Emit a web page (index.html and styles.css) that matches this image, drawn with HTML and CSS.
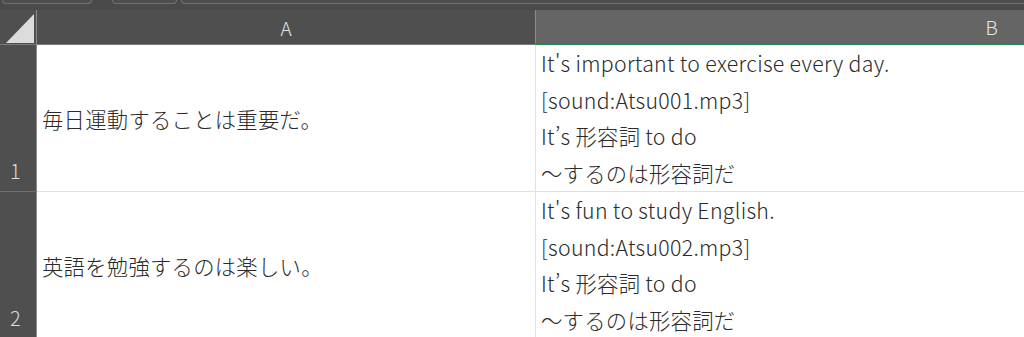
FILE: index.html
```html
<!DOCTYPE html>
<html lang="ja">
<head>
<meta charset="utf-8">
<link rel="stylesheet" href="styles.css">
</head>
<body>
<div class="sheet">
  <div class="topbar">
    <div class="tab tab-1"></div>
    <div class="tab tab-2"></div>
    <div class="tab tab-3"></div>
  </div>
  <div class="grid">
    <div class="corner">
      <svg class="corner-tri" width="28" height="29" viewBox="0 0 28 29"><polygon points="0,29 28,29 28,0" fill="#dcdcdc"/></svg>
    </div>
    <div class="colhead">A</div>
    <div class="colhead colhead-sel"><span class="colhead-b">B</span></div>

    <div class="rowhead">1</div>
    <div class="cell cell-a">毎日運動することは重要だ。</div>
    <div class="cell cell-b">
      <div class="line">It's important to exercise every day.</div>
      <div class="line">[sound:Atsu001.mp3]</div>
      <div class="line">It’s 形容詞 to do</div>
      <div class="line">～するのは形容詞だ</div>
    </div>

    <div class="rowhead">2</div>
    <div class="cell cell-a">英語を勉強するのは楽しい。</div>
    <div class="cell cell-b">
      <div class="line">It's fun to study English.</div>
      <div class="line">[sound:Atsu002.mp3]</div>
      <div class="line">It’s 形容詞 to do</div>
      <div class="line">～するのは形容詞だ</div>
    </div>
  </div>
</div>
</body>
</html>
```
FILE: styles.css
```css
html, body {
  margin: 0;
  padding: 0;
  background: #4b4b4b;
  overflow: hidden;
}
.sheet {
  width: 1024px;
  height: 337px;
  overflow: hidden;
  font-family: "Noto Sans CJK JP", "Noto Sans", sans-serif;
}
.topbar {
  height: 10px;
  display: flex;
  align-items: flex-start;
  background: #4a4a4a;
}
.tab {
  height: 3px;
  border: 1px solid #707070;
  border-top: none;
  border-radius: 0 0 4px 4px;
  background: #4e4e4e;
}
.tab-1 { margin-left: 2px; width: 88px; }
.tab-2 { margin-left: 20px; width: 63px; }
.tab-3 { margin-left: 4px; flex: 1; margin-right: -10px; }

.grid {
  display: grid;
  grid-template-columns: 37px 499px 912px;
  grid-template-rows: 35px 147px 147px;
  width: 1448px;
}
.corner {
  background: #4f4f4f;
  border-right: 1px solid #8a8a8a;
  border-bottom: 1px solid #7a7a7a;
  position: relative;
}
.corner-tri {
  position: absolute;
  left: 6px;
  top: 4px;
}
.colhead {
  background: #4f4f4f;
  border-right: 1px solid #6a6a6a;
  border-bottom: 1px solid #7a7a7a;
  color: #e6e6e6;
  font-size: 19px;
  font-weight: 300;
  display: flex;
  align-items: center;
  justify-content: center;
}
.colhead-sel {
  background: #656565;
  border-bottom: 2px solid #1f8a4c;
  border-left: 1px solid #8a8a8a;
  margin-left: -1px;
}
.rowhead {
  background: #4f4f4f;
  border-right: 1px solid #8a8a8a;
  border-bottom: 1px solid #6e6e6e;
  color: #dadada;
  font-size: 20px;
  font-weight: 300;
  display: flex;
  align-items: flex-end;
  padding-left: 10px;
  padding-bottom: 10px;
  box-sizing: border-box;
  line-height: 1;
}
.cell {
  background: #ffffff;
  color: #2a2a2a;
  border-bottom: 1px solid #e2e2e2;
  border-right: 1px solid #e2e2e2;
  font-size: 21.3px;
  letter-spacing: 0.3px;
  font-weight: 300;
}
.cell-a {
  display: flex;
  align-items: center;
  padding-left: 5px;
}
.cell-b {
  padding-left: 5px;
}
.line {
  height: 36.5px;
  line-height: 36.5px;
  white-space: nowrap;
}
```
